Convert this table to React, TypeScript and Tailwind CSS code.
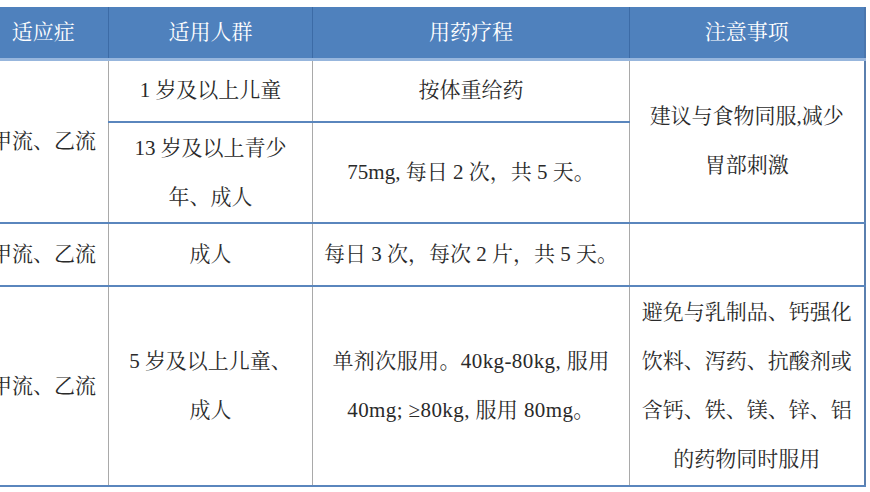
const body =
  "border-x border-x-[#a9a9a9] border-y-2 border-y-[#5a86bd] text-center align-middle leading-[49px] px-2 whitespace-nowrap";
const last = "border-r-2 border-r-[#5a7fae]";

export default function App() {
  return (
    <div className="h-[492px] w-[870px] overflow-hidden bg-white pt-[7px] font-['Liberation_Serif','Noto_Serif_CJK_SC','Noto_Sans_CJK_SC',serif] text-[21px] text-[#2a2a2a]">
      <table className="-ml-[22px] w-[886px] table-fixed border-collapse">
        <colgroup>
          <col className="w-[130px]" />
          <col className="w-[204px]" />
          <col className="w-[317px]" />
          <col className="w-[235px]" />
        </colgroup>
        <thead>
          <tr className="h-[52px] bg-[#4f81bd] text-white">
            <th className="border-b-[3px] border-b-[#97b6dd] border-r border-r-[#3c6ba6] font-normal">适应症</th>
            <th className="border-b-[3px] border-b-[#97b6dd] border-r border-r-[#3c6ba6] font-normal">适用人群</th>
            <th className="border-b-[3px] border-b-[#97b6dd] border-r border-r-[#3c6ba6] font-normal">用药疗程</th>
            <th className="border-b-[3px] border-b-[#97b6dd] border-r-2 border-r-[#4a76ad] font-normal">注意事项</th>
          </tr>
        </thead>
        <tbody>
          <tr className="h-[63px]">
            <td rowSpan={2} className={body}>甲流、乙流</td>
            <td className={body}>1 岁及以上儿童</td>
            <td className={body}>按体重给药</td>
            <td rowSpan={2} className={`${body} ${last}`}>
              建议与食物同服,减少
              <br />
              胃部刺激
            </td>
          </tr>
          <tr className="h-[101px]">
            <td className={body}>
              13 岁及以上青少
              <br />
              年、成人
            </td>
            <td className={body}>75mg, 每日 2 次，共 5 天。</td>
          </tr>
          <tr className="h-[63px]">
            <td className={body}>甲流、乙流</td>
            <td className={body}>成人</td>
            <td className={body}>每日 3 次，每次 2 片，共 5 天。</td>
            <td className={`${body} ${last}`}></td>
          </tr>
          <tr className="h-[200px]">
            <td className={body}>甲流、乙流</td>
            <td className={body}>
              5 岁及以上儿童、
              <br />
              成人
            </td>
            <td className={`${body} tracking-[0.4px]`}>
              单剂次服用。40kg-80kg, 服用
              <br />
              40mg; ≥80kg, 服用 80mg。
            </td>
            <td className={`${body} ${last}`}>
              避免与乳制品、钙强化
              <br />
              饮料、泻药、抗酸剂或
              <br />
              含钙、铁、镁、锌、铝
              <br />
              的药物同时服用
            </td>
          </tr>
        </tbody>
      </table>
    </div>
  );
}
